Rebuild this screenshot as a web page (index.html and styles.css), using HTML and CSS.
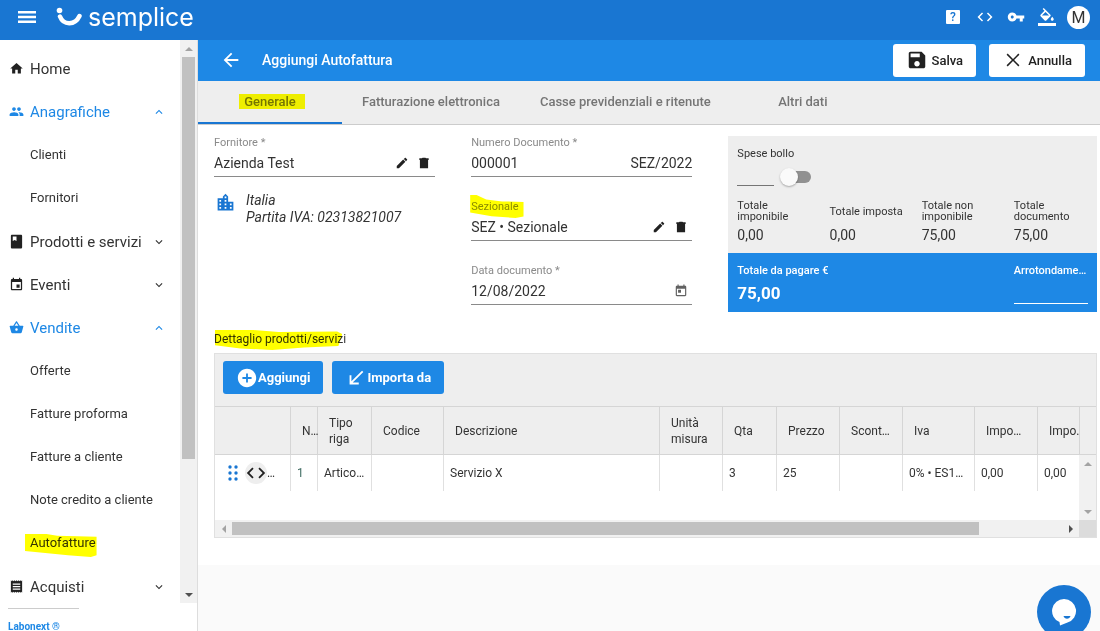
FILE: index.html
```html
<!DOCTYPE html>
<html lang="it">
<head>
    <meta charset="UTF-8">
    <meta name="viewport" content="width=device-width, initial-scale=1.0">
    <title>Aggiungi Autofattura</title>
    <link rel="stylesheet" href="styles.css">
</head>
<body>
    <!-- Icons used more than once -->
    <svg class="sprite" aria-hidden="true">
        <symbol id="down" viewBox="0 0 24 24"><path d="M16.59 8.59L12 13.17 7.41 8.59 6 10l6 6 6-6z"/></symbol>
        <symbol id="up" viewBox="0 0 24 24"><path d="M12 8l-6 6 1.41 1.41L12 10.83l4.59 4.58L18 14z"/></symbol>
        <symbol id="code" viewBox="0 0 24 24"><path d="M9.4 16.6L4.8 12l4.6-4.6L8 6l-6 6 6 6 1.4-1.4zm5.2 0l4.6-4.6-4.6-4.6L16 6l6 6-6 6-1.4-1.4z"/></symbol>
        <symbol id="edit" viewBox="0 0 24 24"><path d="M3 17.25V21h3.75L17.81 9.94l-3.75-3.75L3 17.25zM20.71 7.04c.39-.39.39-1.02 0-1.41l-2.34-2.34c-.39-.39-1.02-.39-1.41 0l-1.83 1.83 3.75 3.75 1.83-1.83z"/></symbol>
        <symbol id="delete" viewBox="0 0 24 24"><path d="M5 21h14V7H5v14zM20 4h-4.500l-1-1h-5l-1 1H4v3h16V4z"/></symbol>
    </svg>

    <header class="topbar">
        <button class="icon-button menu" aria-label="Menu">
            <svg viewBox="0 0 18 12"><path d="M0 0h18v2.4H0zM0 4.8h18v2.4H0zM0 9.6h18V12H0z"/></svg>
        </button>
        <a class="logo" href="#">
            <svg viewBox="0 0 26 20"><circle cx="3.5" cy="3.5" r="2.8"/><path d="M4 9.5c3.5 9 15 9 19.500-.5" fill="none" stroke="#fff" stroke-width="4.5" stroke-linecap="round"/></svg>
            <span>semplice</span>
        </a>
        <div class="topbar-actions">
            <button class="help" aria-label="Aiuto">?</button>
            <button class="icon-button" aria-label="Codice"><svg class="icon-18"><use href="#code"/></svg></button>
            <button class="icon-button" aria-label="Chiavi"><svg class="icon-18" viewBox="0 0 24 24"><path d="M12.65 10C11.83 7.67 9.61 6 7 6c-3.31 0-6 2.690-6 6s2.690 6 6 6c2.610 0 4.830-1.670 5.650-4H17v4h4v-4h2v-4H12.650zM7 14c-1.100 0-2-.9-2-2s.9-2 2-2 2 .9 2 2-.9 2-2 2z"/></svg></button>
            <button class="icon-button" aria-label="Tema"><svg class="icon-18" viewBox="0 0 24 24"><path d="M16.560 8.940L7.620 0 6.210 1.410l2.380 2.380-5.150 5.150c-.59.59-.59 1.540 0 2.120l5.500 5.500c.29.29.68.44 1.060.44s.77-.15 1.060-.44l5.500-5.500c.59-.58.59-1.530 0-2.120zM5.210 10L10 5.210 14.790 10H5.210zM19 11.500s-2 2.170-2 3.500c0 1.100.9 2 2 2s2-.9 2-2c0-1.330-2-3.500-2-3.500zM0 20h24v4H0z"/></svg></button>
            <button class="avatar">M</button>
        </div>
    </header>

    <div class="layout">
        <aside class="sidebar">
            <div class="sidebar-scroll">
                <nav>
                    <a class="nav-item" href="#">
                        <svg class="nav-icon" viewBox="0 0 24 24"><path d="M10 20v-6h4v6h5v-8h3L12 3 2 12h3v8z"/></svg>Home
                    </a>
                    <button class="nav-item open">
                        <svg class="nav-icon" viewBox="0 0 24 24"><path d="M16 11c1.660 0 2.990-1.340 2.990-3S17.660 5 16 5s-3 1.340-3 3 1.340 3 3 3zm-8 0c1.660 0 2.990-1.340 2.990-3S9.660 5 8 5 5 6.340 5 8s1.340 3 3 3zm0 2c-2.330 0-7 1.170-7 3.500V19h14v-2.500c0-2.330-4.670-3.500-7-3.500zm8 0c-.29 0-.62.02-.97.05 1.160.84 1.970 1.970 1.970 3.450V19h6v-2.500c0-2.330-4.670-3.500-7-3.500z"/></svg>Anagrafiche
                        <svg class="chevron"><use href="#up"/></svg>
                    </button>
                    <div class="submenu">
                        <a href="#">Clienti</a>
                        <a href="#">Fornitori</a>
                    </div>
                    <button class="nav-item">
                        <svg class="nav-icon" viewBox="0 0 24 24"><path fill-rule="evenodd" d="M19 1H5c-1.100 0-2 .9-2 2v18c0 1.100.9 2 2 2h14c1.100 0 2-.9 2-2V3c0-1.100-.9-2-2-2zM6 4h6v7l-3-1.500L6 11z"/></svg>Prodotti e servizi
                        <svg class="chevron"><use href="#down"/></svg>
                    </button>
                    <button class="nav-item">
                        <svg class="nav-icon" viewBox="0 0 24 24"><path d="M17 12h-5v5h5v-5zM16 1v2H8V1H6v2H5c-1.110 0-1.990.9-1.990 2L3 19c0 1.100.89 2 2 2h14c1.100 0 2-.9 2-2V5c0-1.100-.9-2-2-2h-1V1h-2zm3 18H5V8h14v11z"/></svg>Eventi
                        <svg class="chevron"><use href="#down"/></svg>
                    </button>
                    <button class="nav-item open">
                        <svg class="nav-icon" viewBox="0 0 24 24"><path d="M17.210 9l-4.380-6.560c-.19-.28-.51-.42-.83-.42-.32 0-.64.14-.83.43L6.790 9H2c-.55 0-1 .45-1 1 0 .09.01.18.04.27l2.540 9.270c.23.84 1 1.460 1.920 1.460h13c.92 0 1.690-.62 1.930-1.460l2.540-9.270L23 10c0-.55-.45-1-1-1h-4.790zM9 9l3-4.400L15 9H9zm3 8c-1.100 0-2-.9-2-2s.9-2 2-2 2 .9 2 2-.9 2-2 2z"/></svg>Vendite
                        <svg class="chevron"><use href="#up"/></svg>
                    </button>
                    <div class="submenu">
                        <a href="#">Offerte</a>
                        <a href="#">Fatture proforma</a>
                        <a href="#">Fatture a cliente</a>
                        <a href="#">Note credito a cliente</a>
                        <a href="#"><span class="marked marked-nav">Autofatture</span></a>
                    </div>
                    <button class="nav-item">
                        <svg class="nav-icon" viewBox="0 0 24 24"><path d="M18 17H6v-2h12v2zm0-4H6v-2h12v2zm0-4H6V7h12v2zM3 22l1.500-1.500L6 22l1.500-1.500L9 22l1.500-1.500L12 22l1.500-1.500L15 22l1.500-1.500L18 22l1.500-1.500L21 22V2l-1.500 1.500L18 2l-1.500 1.500L15 2l-1.500 1.500L12 2l-1.500 1.500L9 2 7.500 3.500 6 2 4.500 3.500 3 2v20z"/></svg>Acquisti
                        <svg class="chevron"><use href="#down"/></svg>
                    </button>
                </nav>
                <div class="scrollbar vertical">
                    <span class="arrow arrow-up"></span>
                    <div class="track"><div class="thumb nav-thumb"></div></div>
                    <span class="arrow arrow-down dark"></span>
                </div>
            </div>
            <div class="sidebar-footer"><a href="#">Labonext ®</a></div>
        </aside>

        <main>
            <div class="page-header">
                <button class="icon-button" aria-label="Indietro"><svg class="icon-22" viewBox="0 0 24 24"><path d="M20 11H7.830l5.590-5.590L12 4l-8 8 8 8 1.410-1.410L7.830 13H20v-2z"/></svg></button>
                <h1>Aggiungi Autofattura</h1>
                <button class="button light"><svg class="icon-22" viewBox="0 0 24 24"><path d="M17 3H5c-1.110 0-2 .9-2 2v14c0 1.100.89 2 2 2h14c1.100 0 2-.9 2-2V7l-4-4zm-5 16c-1.660 0-3-1.340-3-3s1.340-3 3-3 3 1.340 3 3-1.340 3-3 3zm3-10H5V5h10v4z"/></svg>Salva</button>
                <button class="button light"><svg class="icon-22" viewBox="0 0 24 24"><path d="M19 6.200L17.800 5 12 10.800 6.200 5 5 6.200l5.800 5.800L5 17.800 6.200 19l5.800-5.800 5.800 5.800 1.200-1.200-5.800-5.800z"/></svg>Annulla</button>
            </div>

            <div class="tabs" role="tablist">
                <button class="tab active" role="tab"><span class="marked marked-tab">Generale</span></button>
                <button class="tab" role="tab">Fatturazione elettronica</button>
                <button class="tab" role="tab">Casse previdenziali e ritenute</button>
                <button class="tab" role="tab">Altri dati</button>
            </div>

            <div class="panel">
                <form class="form-grid">
                    <div class="column">
                        <div class="field">
                            <label for="fornitore">Fornitore *</label>
                            <div class="control">
                                <input type="text" id="fornitore" value="Azienda Test">
                                <button type="button" class="icon-button" aria-label="Modifica"><svg class="icon-14"><use href="#edit"/></svg></button>
                                <button type="button" class="icon-button" aria-label="Elimina"><svg class="icon-14"><use href="#delete"/></svg></button>
                            </div>
                        </div>
                        <div class="supplier">
                            <svg viewBox="0 0 24 24"><path d="M15 11V5l-3-3-3 3v2H3v14h18V11h-6zm-8 8H5v-2h2v2zm0-4H5v-2h2v2zm0-4H5V9h2v2zm6 8h-2v-2h2v2zm0-4h-2v-2h2v2zm0-4h-2V9h2v2zm0-4h-2V5h2v2zm6 12h-2v-2h2v2zm0-4h-2v-2h2v2z"/></svg>
                            <p>Italia<br>Partita IVA: 02313821007</p>
                        </div>
                    </div>

                    <div class="column">
                        <div class="field">
                            <label for="numero">Numero Documento *</label>
                            <div class="control flush">
                                <input type="text" id="numero" value="000001">
                                <span>SEZ/2022</span>
                            </div>
                        </div>
                        <div class="field">
                            <label for="sezionale"><span class="marked marked-label">Sezionale</span></label>
                            <div class="control">
                                <input type="text" id="sezionale" value="SEZ • Sezionale">
                                <button type="button" class="icon-button" aria-label="Modifica"><svg class="icon-14"><use href="#edit"/></svg></button>
                                <button type="button" class="icon-button" aria-label="Elimina"><svg class="icon-14"><use href="#delete"/></svg></button>
                            </div>
                        </div>
                        <div class="field">
                            <label for="data">Data documento *</label>
                            <div class="control">
                                <input type="text" id="data" value="12/08/2022">
                                <button type="button" class="icon-button calendar" aria-label="Calendario"><svg class="icon-14" viewBox="0 0 24 24"><path d="M19 3h-1V1h-2v2H8V1H6v2H5c-1.110 0-1.990.9-1.990 2L3 19c0 1.100.89 2 2 2h14c1.100 0 2-.9 2-2V5c0-1.100-.9-2-2-2zm0 16H5V8h14v11zM7 10h5v5H7z"/></svg></button>
                            </div>
                        </div>
                    </div>

                    <!-- Totals -->
                    <div class="summary">
                        <div class="summary-top">
                            <label for="bollo">Spese bollo</label>
                            <div class="bollo">
                                <input type="text" id="bollo">
                                <input type="checkbox" class="switch" aria-label="Applica bollo">
                            </div>
                            <dl class="totals">
                                <div><dt>Totale imponibile</dt><dd>0,00</dd></div>
                                <div><dt>Totale imposta</dt><dd>0,00</dd></div>
                                <div><dt>Totale non imponibile</dt><dd>75,00</dd></div>
                                <div><dt>Totale documento</dt><dd>75,00</dd></div>
                            </dl>
                        </div>
                        <div class="summary-pay">
                            <div class="pay-total">
                                <span>Totale da pagare €</span>
                                <strong>75,00</strong>
                            </div>
                            <div class="pay-round">
                                <label for="arrotondamento">Arrotondame…</label>
                                <input type="text" id="arrotondamento">
                            </div>
                        </div>
                    </div>
                </form>

                <h2><span class="marked marked-title">Dettaglio prodotti/servizi</span></h2>

                <section class="grid">
                    <div class="grid-toolbar">
                        <button class="button"><svg class="icon-22" viewBox="0 0 24 24"><path d="M12 2C6.480 2 2 6.480 2 12s4.480 10 10 10 10-4.480 10-10S17.520 2 12 2zm5 11h-4v4h-2v-4H7v-2h4V7h2v4h4v2z"/></svg>Aggiungi</button>
                        <button class="button"><svg class="icon-22" viewBox="0 0 24 24"><path d="M20 5.410L18.590 4 7 15.590V9H5v10h10v-2H8.410z"/></svg>Importa da</button>
                    </div>
                    <div class="grid-main">
                        <div class="grid-view">
                            <table>
                                <colgroup>
                                    <col class="w-tools"><col class="w-num"><col class="w-s"><col class="w-l"><col class="w-desc"><col class="w-m">
                                    <col class="w-s"><col class="w-m"><col class="w-m"><col class="w-l"><col class="w-m"><col class="w-m">
                                </colgroup>
                                <thead>
                                    <tr>
                                        <th></th>
                                        <th class="nowrap">N…</th>
                                        <th>Tipo riga</th>
                                        <th>Codice</th>
                                        <th>Descrizione</th>
                                        <th>Unità misura</th>
                                        <th>Qta</th>
                                        <th>Prezzo</th>
                                        <th>Scont…</th>
                                        <th>Iva</th>
                                        <th>Impo…</th>
                                        <th>Impo..</th>
                                    </tr>
                                </thead>
                                <tbody>
                                    <tr>
                                        <td>
                                            <div class="row-tools">
                                                <svg class="drag" viewBox="0 0 10 16"><circle cx="2" cy="2" r="1.7"/><circle cx="8" cy="2" r="1.7"/><circle cx="2" cy="8" r="1.7"/><circle cx="8" cy="8" r="1.7"/><circle cx="2" cy="14" r="1.7"/><circle cx="8" cy="14" r="1.7"/></svg>
                                                <button class="row-code" aria-label="Codice riga"><svg><use href="#code"/></svg></button>…
                                            </div>
                                        </td>
                                        <td class="number">1</td>
                                        <td>Artico…</td>
                                        <td></td>
                                        <td>Servizio X</td>
                                        <td></td>
                                        <td>3</td>
                                        <td>25</td>
                                        <td></td>
                                        <td>0% • ES1…</td>
                                        <td>0,00</td>
                                        <td>0,00</td>
                                    </tr>
                                </tbody>
                            </table>
                        </div>
                        <div class="grid-side">
                            <div class="head-filler"></div>
                            <div class="scrollbar vertical">
                                <span class="arrow arrow-up"></span>
                                <div class="track"></div>
                                <span class="arrow arrow-down"></span>
                            </div>
                        </div>
                    </div>
                    <div class="grid-bottom">
                        <div class="scrollbar horizontal">
                            <span class="arrow arrow-left"></span>
                            <div class="track"><div class="thumb grid-thumb"></div></div>
                            <span class="arrow arrow-right dark"></span>
                        </div>
                        <div class="corner"></div>
                    </div>
                </section>
            </div>
        </main>
    </div>

    <button class="chat" aria-label="Chat">
        <svg viewBox="0 0 26 28"><path d="M13 1a12 12 0 0 1 3.500 23.500L9 27.500l-.5-3.400A12 12 0 0 1 13 1z" fill="#fff"/><path d="M12.500 18h7c-1 3.500-6 3.500-7 0z" fill="#1976d2"/></svg>
    </button>
</body>
</html>
```
FILE: styles.css
```css
* {
    box-sizing: border-box;
}
body {
    margin: 0;
    height: 100vh;
    display: flex;
    flex-direction: column;
    overflow: hidden;
    background-color: #fafafa;
    color: #333;
    font-family: Roboto, Arial, sans-serif;
    font-size: 14px;
}
button, input {
    font: inherit;
    color: inherit;
    background: none;
    border: none;
    border-radius: 0;
    padding: 0;
    margin: 0;
    outline: none;
}
button {
    cursor: pointer;
}
a {
    color: inherit;
    text-decoration: none;
}
svg {
    fill: currentColor;
    flex: none;
    display: block;
}
.sprite {
    display: none;
}
.icon-14 {
    width: 14px;
    height: 14px;
}
.icon-18 {
    width: 18px;
    height: 18px;
}
.icon-22 {
    width: 22px;
    height: 22px;
}

/* Top bar */
.topbar {
    flex: none;
    display: flex;
    align-items: center;
    height: 40px;
    padding: 0 10px 6px 18px;
    background-color: #1976d2;
    color: white;
}
.menu svg {
    width: 18px;
    height: 12px;
}
.logo {
    display: flex;
    align-items: center;
    gap: 6px;
    margin-left: 20px;
    font-family: Inter, sans-serif;
    font-size: 25px;
    line-height: 32px;
}
.logo svg {
    width: 26px;
    height: 20px;
}
.topbar-actions {
    display: flex;
    align-items: center;
    gap: 13px;
    margin-left: auto;
}
.help {
    width: 14px;
    height: 14px;
    margin-right: 3px;
    border-radius: 1px;
    background-color: white;
    color: #1976d2;
    font-size: 12px;
    font-weight: 500;
    line-height: 14px;
}
.avatar {
    width: 23px;
    height: 23px;
    margin-left: -2px;
    border-radius: 50%;
    background-color: white;
    color: #333;
    font-size: 16px;
    line-height: 23px;
}

.layout {
    flex: 1;
    display: flex;
    min-height: 0;
}

/* Sidebar */
.sidebar {
    flex: none;
    display: flex;
    flex-direction: column;
    width: 198px;
    background-color: white;
    border-right: 1px solid #ddd;
}
.sidebar-scroll {
    flex: 1;
    display: flex;
    min-height: 0;
}
nav {
    flex: 1;
    padding-top: 7px;
    overflow: hidden;
}
.nav-item {
    display: flex;
    align-items: center;
    gap: 6px;
    width: 100%;
    height: 43px;
    padding: 0 14px 0 9px;
    font-size: 15px;
    text-align: left;
}
.nav-icon {
    width: 15px;
    height: 15px;
    color: #212121;
}
.nav-item.open, .nav-item.open .nav-icon {
    color: #1e88e5;
}
.chevron {
    width: 14px;
    height: 14px;
    margin-left: auto;
}
.submenu {
    padding-bottom: 1px;
}
.submenu a {
    display: block;
    padding-left: 30px;
    font-size: 13px;
    line-height: 43px;
}
.sidebar-footer {
    height: 28px;
    padding: 5px 8px 0;
    color: #1e88e5;
    font-size: 10px;
    font-weight: 700;
    line-height: 12px;
}
.sidebar-footer::before {
    content: "";
    display: block;
    width: 71px;
    margin-bottom: 12px;
    border-top: 1px solid #ccc;
}

/* Scrollbars */
.scrollbar {
    display: flex;
    background-color: #f1f1f1;
}
.scrollbar.vertical {
    flex-direction: column;
    width: 17px;
    padding: 0 2px;
}
.scrollbar.horizontal {
    flex: 1;
    height: 17px;
    padding: 2px 0;
}
.track {
    flex: 1;
}
.thumb {
    background-color: #c1c1c1;
}
.nav-thumb {
    height: 76%;
}
.grid-thumb {
    width: 90%;
    height: 100%;
}
.arrow {
    flex: none;
    display: flex;
    align-items: center;
    justify-content: center;
    width: 17px;
    height: 17px;
    color: #a3a3a3;
}
.vertical .arrow {
    width: 13px;
}
.horizontal .arrow {
    height: 13px;
}
.arrow.dark {
    color: #505050;
}
.arrow::before {
    content: "";
    border: 4px solid transparent;
}
.arrow-up::before {
    border-top: none;
    border-bottom-color: currentColor;
}
.arrow-down::before {
    border-bottom: none;
    border-top-color: currentColor;
}
.arrow-left::before {
    border-left: none;
    border-right-color: currentColor;
}
.arrow-right::before {
    border-right: none;
    border-left-color: currentColor;
}

/* Page header */
main {
    flex: 1;
    min-width: 0;
}
.page-header {
    display: flex;
    align-items: center;
    height: 41px;
    padding: 0 15px 1px 22px;
    background-color: #1e88e5;
    color: white;
}
h1 {
    flex: 1;
    margin: 0 0 0 20px;
    font-size: 14px;
    font-weight: 500;
}
.button {
    display: flex;
    align-items: center;
    height: 33px;
    padding: 0 13px;
    border-radius: 3px;
    background-color: #1e88e5;
    color: white;
    font-size: 13px;
    font-weight: 700;
}
.button.light {
    gap: 4px;
    margin-left: 13px;
    background-color: white;
    color: #212121;
    font-weight: 500;
}

/* Tabs */
.tabs {
    display: flex;
    height: 44px;
    background-color: #eee;
    border-bottom: 1px solid #ccc;
}
.tab {
    min-width: 144px;
    padding: 0 20px 2px;
    border-top: 2px solid transparent;
    border-bottom: 2px solid transparent;
    color: #757575;
    font-size: 13px;
    font-weight: 500;
}
.tab.active {
    border-bottom-color: #1976d2;
}

/* Yellow highlighter */
.marked {
    position: relative;
}
.marked::after {
    content: "";
    position: absolute;
    inset: 0;
    background-color: #ff0;
    mix-blend-mode: multiply;
    pointer-events: none;
}
.marked-tab::after {
    inset: 0 -9px 0 -5px;
}
.marked-nav::after {
    inset: -1px -1px -7px -5px;
    clip-path: polygon(0 0, 30% 0, 45% 8%, 100% 12%, 100% 92%, 92% 100%, 60% 92%, 0 74%);
}
.marked-label::after {
    inset: -5px -5px -5px -1px;
    clip-path: polygon(0 0, 12% 0, 30% 20%, 60% 28%, 100% 30%, 100% 94%, 85% 100%, 40% 92%, 0 76%);
}
.marked-title::after {
    inset: -2px 4px -4px 1px;
    clip-path: polygon(0 0, 30% 0, 50% 10%, 96% 8%, 100% 20%, 97% 80%, 70% 88%, 45% 100%, 20% 92%, 0 76%);
}

/* Form */
.panel {
    padding: 11px 3px 27px 16px;
    background-color: white;
}
.form-grid {
    display: grid;
    grid-template-columns: 3fr 3fr 5fr;
    gap: 36px;
    align-items: start;
}
.column {
    display: flex;
    flex-direction: column;
    gap: 23px;
    min-width: 0;
}
.field label {
    display: block;
    color: #8a8a8a;
    font-size: 11px;
    line-height: 14px;
}
.control {
    display: flex;
    align-items: center;
    gap: 8px;
    height: 27px;
    padding-right: 4px;
    border-bottom: 1px solid #8a8a8a;
    color: #333;
}
.control.flush {
    padding-right: 0;
}
.control input {
    flex: 1;
    min-width: 0;
    width: 100%;
}
.control .icon-button {
    color: #212121;
}
.control .calendar {
    color: #616161;
}
.supplier {
    display: flex;
    gap: 10px;
    margin: -8px 0 0 1px;
    font-style: italic;
    line-height: 17px;
}
.supplier svg {
    width: 21px;
    height: 21px;
    color: #1976d2;
}
.supplier p {
    margin: 0;
}

/* Summary */
.summary {
    min-width: 0;
    font-size: 11px;
}
.summary-top {
    height: 117px;
    padding: 11px 9px 0;
    background-color: #eee;
}
.summary-top label {
    display: block;
    line-height: 13px;
}
.bollo {
    display: flex;
    align-items: flex-end;
    gap: 6px;
    height: 26px;
}
.bollo input[type="text"] {
    width: 37px;
    height: 26px;
    border-bottom: 1px solid #757575;
}
.switch {
    appearance: none;
    position: relative;
    width: 31px;
    height: 18px;
}
.switch::before {
    content: "";
    position: absolute;
    inset: 3px 0 3px 4px;
    border-radius: 6px;
    background-color: #919191;
}
.switch::after {
    content: "";
    position: absolute;
    left: 0;
    top: 0;
    width: 18px;
    height: 18px;
    border-radius: 50%;
    background-color: #fafafa;
    box-shadow: 0 1px 2px rgba(0,0,0,0.3);
}
.totals {
    display: grid;
    grid-template-columns: repeat(4, 1fr);
    gap: 18px;
    margin: 14px 0 0;
}
.totals dt {
    display: flex;
    align-items: center;
    height: 22px;
    line-height: 11px;
}
.totals dd {
    margin: 0;
    font-size: 14px;
    line-height: 26px;
}
.summary-pay {
    display: grid;
    grid-template-columns: repeat(4, 1fr);
    gap: 18px;
    height: 59px;
    padding: 10px 9px;
    background-color: #1e88e5;
    color: white;
    font-weight: 500;
}
.pay-total {
    grid-column: span 3;
}
.pay-total span, .pay-round label {
    display: block;
    line-height: 15px;
    white-space: nowrap;
}
.pay-total strong {
    font-size: 17px;
    font-weight: 700;
    line-height: 30px;
}
.pay-round {
    min-width: 0;
}
.pay-round input {
    width: 100%;
    height: 26px;
    border-bottom: 1px solid white;
}

/* Product grid */
h2 {
    margin: 20px 0 6px;
    font-size: 12px;
    font-weight: 400;
    line-height: 15px;
}
.grid {
    border: 1px solid #e0e0e0;
    background-color: white;
}
.grid-toolbar {
    display: flex;
    gap: 9px;
    padding: 7px 8px 12px;
    background-color: #eee;
}
.grid-main {
    display: flex;
}
.grid-view {
    flex: 1;
    min-width: 0;
    height: 114px;
    overflow: hidden;
}
table {
    width: 886px;
    table-layout: fixed;
    border-collapse: separate;
    border-spacing: 0;
    font-size: 12px;
}
.w-tools { width: 76px; }
.w-num { width: 27px; }
.w-s { width: 54px; }
.w-m { width: 63px; }
.w-l { width: 72px; }
.w-desc { width: 216px; }
th {
    height: 49px;
    padding: 0 0 0 11px;
    background-color: #eee;
    border: solid #d5d5d5;
    border-width: 1px 1px 1px 0;
    font-weight: 400;
    line-height: 16px;
    text-align: left;
}
th.nowrap {
    white-space: nowrap;
}
td {
    height: 36px;
    padding: 0 0 0 6px;
    border-right: 1px solid #e0e0e0;
    white-space: nowrap;
}
.number {
    color: #3f6b62;
}
.row-tools {
    display: flex;
    align-items: center;
    gap: 7px;
    padding-left: 7px;
}
.drag {
    width: 10px;
    height: 16px;
    color: #1976d2;
}
.row-code {
    width: 22px;
    height: 22px;
    margin-right: -7px;
    border-radius: 50%;
    background-color: #eee;
    color: #212121;
}
.row-code svg {
    width: 22px;
    height: 22px;
}
.grid-side {
    display: flex;
    flex-direction: column;
    width: 17px;
}
.head-filler {
    height: 49px;
    background-color: #eee;
    border: 1px solid #d5d5d5;
    border-right: none;
}
.grid-side .scrollbar {
    flex: 1;
}
.grid-bottom {
    display: flex;
}
.corner {
    width: 17px;
    background-color: #dcdcdc;
}

/* Chat */
.chat {
    position: fixed;
    right: 9px;
    bottom: -8px;
    display: flex;
    align-items: center;
    justify-content: center;
    width: 54px;
    height: 54px;
    border-radius: 50%;
    background-color: #1976d2;
}
.chat svg {
    width: 26px;
    height: 28px;
}
```
